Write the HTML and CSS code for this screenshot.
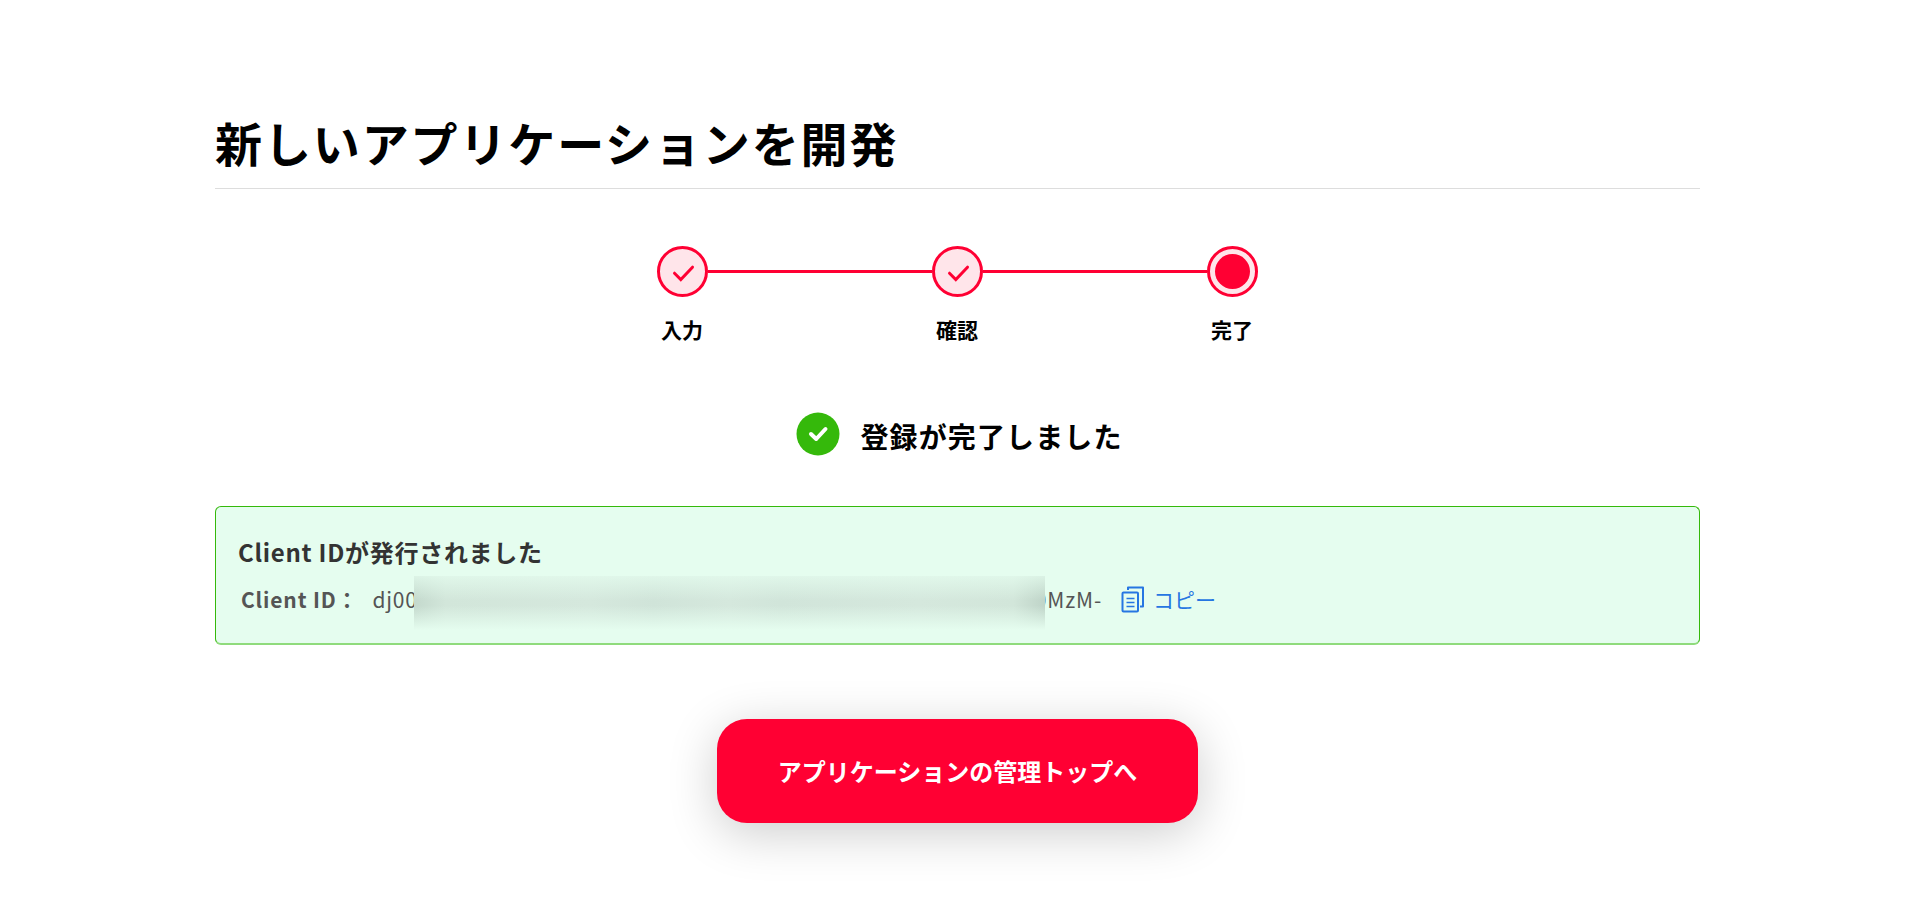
FILE: index.html
```
<!DOCTYPE html>
<html lang="ja">
<head>
<meta charset="utf-8">
<meta name="viewport" content="width=device-width, initial-scale=1">
<title>新しいアプリケーションを開発</title>
<link rel="stylesheet" href="styles.css">
</head>
<body>
<main class="page">
  <h1 class="page-title">新しいアプリケーションを開発</h1>

  <ol class="steps">
    <li class="step">
      <div class="step-track">
        <span class="step-line step-line-none"></span>
        <span class="step-circle"><svg class="step-check" viewBox="0 0 24 24" aria-hidden="true"><path d="M3.500 13.200l6.300 6.300L21.500 7.200"/></svg></span>
        <span class="step-line"></span>
      </div>
      <span class="step-label">入力</span>
    </li>
    <li class="step">
      <div class="step-track">
        <span class="step-line"></span>
        <span class="step-circle"><svg class="step-check" viewBox="0 0 24 24" aria-hidden="true"><path d="M3.500 13.200l6.300 6.300L21.500 7.200"/></svg></span>
        <span class="step-line"></span>
      </div>
      <span class="step-label">確認</span>
    </li>
    <li class="step" aria-current="step">
      <div class="step-track">
        <span class="step-line"></span>
        <span class="step-circle"><span class="step-dot"></span></span>
        <span class="step-line step-line-none"></span>
      </div>
      <span class="step-label">完了</span>
    </li>
  </ol>

  <div class="result">
    <svg class="result-icon" viewBox="0 0 44 44" aria-hidden="true"><circle cx="22" cy="22" r="21.5"/><path d="M15 22l5.200 5L29.500 17"/></svg>
    <h2 class="result-title">登録が完了しました</h2>
  </div>

  <section class="notice">
    <h3 class="notice-title">Client IDが発行されました</h3>
    <div class="client">
      <span class="client-label">Client ID：</span>
      <span class="client-id">dj00<span class="client-mask"></span>0MzM-</span>
      <button class="copy" type="button">
        <svg class="copy-icon" viewBox="0 0 24 27" aria-hidden="true"><path d="M7 4V1.500h15v19h-3"/><rect x="1.500" y="6.500" width="15.500" height="19" rx="1"/><path class="copy-lines" d="M5.500 12.500h8M5.500 16.500h8M5.500 20.500h8"/></svg>
        コピー
      </button>
    </div>
  </section>

  <a class="top-link" href="#">アプリケーションの管理トップへ</a>
</main>
</body>
</html>
```
FILE: styles.css
```
* {
  box-sizing: border-box;
}

body {
  margin: 0;
  background: #fff;
  color: #000;
  font-family: "Noto Sans CJK JP", sans-serif;
}

.page {
  display: flex;
  flex-direction: column;
  align-items: center;
  max-width: 1517px;
  margin: 0 auto;
  padding: 108px 17px 64px 15px;
}

.page-title {
  width: 100%;
  margin: 0;
  padding-bottom: 12px;
  border-bottom: 1px solid #ddd;
  font-size: 47px;
  line-height: 68px;
  letter-spacing: 0.04em;
}

.steps {
  display: flex;
  width: 100%;
  max-width: 825px;
  margin: 57px 0 0;
  padding: 0;
  list-style: none;
}

.step {
  flex: 1;
  display: flex;
  flex-direction: column;
  gap: 16px;
  align-items: center;
}

.step-track {
  display: flex;
  align-items: center;
  width: 100%;
}

.step-line {
  flex: 1;
  height: 3px;
  background: #ff0033;
}

.step-line-none {
  background: transparent;
}

.step-circle {
  display: flex;
  align-items: center;
  justify-content: center;
  width: 51px;
  height: 51px;
  border: 3px solid #ff0033;
  border-radius: 50%;
  background: #ffe5ea;
}

.step-check {
  width: 24px;
  height: 24px;
  fill: none;
  stroke: #ff0033;
  stroke-width: 3;
  stroke-linecap: round;
}

.step-dot {
  width: 35px;
  height: 35px;
  border-radius: 50%;
  background: #ff0033;
}

.step-label {
  padding-right: 1px;
  font-size: 21px;
  font-weight: 700;
  line-height: 32px;
}

.result {
  display: flex;
  align-items: center;
  gap: 20px;
  margin-top: 67px;
  padding-left: 4px;
}

.result-icon {
  width: 44px;
  height: 44px;
  fill: #35b90b;
}

.result-icon path {
  fill: none;
  stroke: #fff;
  stroke-width: 4;
  stroke-linecap: round;
  stroke-linejoin: round;
}

.result-title {
  margin: 0;
  padding-top: 4px;
  font-size: 28px;
  line-height: 40px;
  letter-spacing: 0.04em;
}

.notice {
  width: 100%;
  margin-top: 50px;
  padding: 27px 22px;
  border: 1px solid #35b90b;
  border-bottom: 2px solid #8fdb7c;
  border-radius: 6px;
  background: #e5fdef;
}

.notice-title {
  margin: 0;
  color: #333;
  font-size: 24px;
  line-height: 36px;
  letter-spacing: 0.03em;
}

.client {
  display: flex;
  align-items: center;
  margin: 13px 0 1px;
  padding-left: 3px;
  color: #555;
  font-size: 21px;
  line-height: 32px;
  letter-spacing: 0.04em;
}

.client-label {
  font-weight: 700;
}

.client-id {
  display: flex;
  align-items: center;
  margin-left: 14px;
}

.client-mask {
  position: relative;
  width: 631px;
  height: 54px;
  margin: -7px -10px -15px -4px;
  background:
    linear-gradient(#e5fdefbb, #e5fdef00 45%, #e5fdef00 55%, #e5fdef),
    linear-gradient(90deg, #c4d9cd, #d2e6da 5%, #d5e8dd 28%, #d0e4d9 38%, #d5e8dd 50%, #d1e5da 58%, #d5e8dd 80%, #d2e6da 95%, #bfd4c8);
}

.copy {
  display: flex;
  align-items: center;
  gap: 8px;
  margin-left: 19px;
  padding: 0;
  border: 0;
  background: none;
  color: #2676e2;
  font: inherit;
  cursor: pointer;
}

.copy-icon {
  width: 24px;
  height: 27px;
  fill: none;
  stroke: #2676e2;
  stroke-width: 2;
  stroke-linejoin: round;
}

.copy-icon .copy-lines {
  stroke-width: 1.5;
}

.top-link {
  margin-top: 74px;
  padding: 34px 61px;
  border-radius: 30px;
  background: #ff0033;
  box-shadow: 0 10px 50px rgba(0, 0, 0, 0.2);
  color: #fff;
  font-size: 24px;
  font-weight: 700;
  line-height: 36px;
  text-decoration: none;
}
```
